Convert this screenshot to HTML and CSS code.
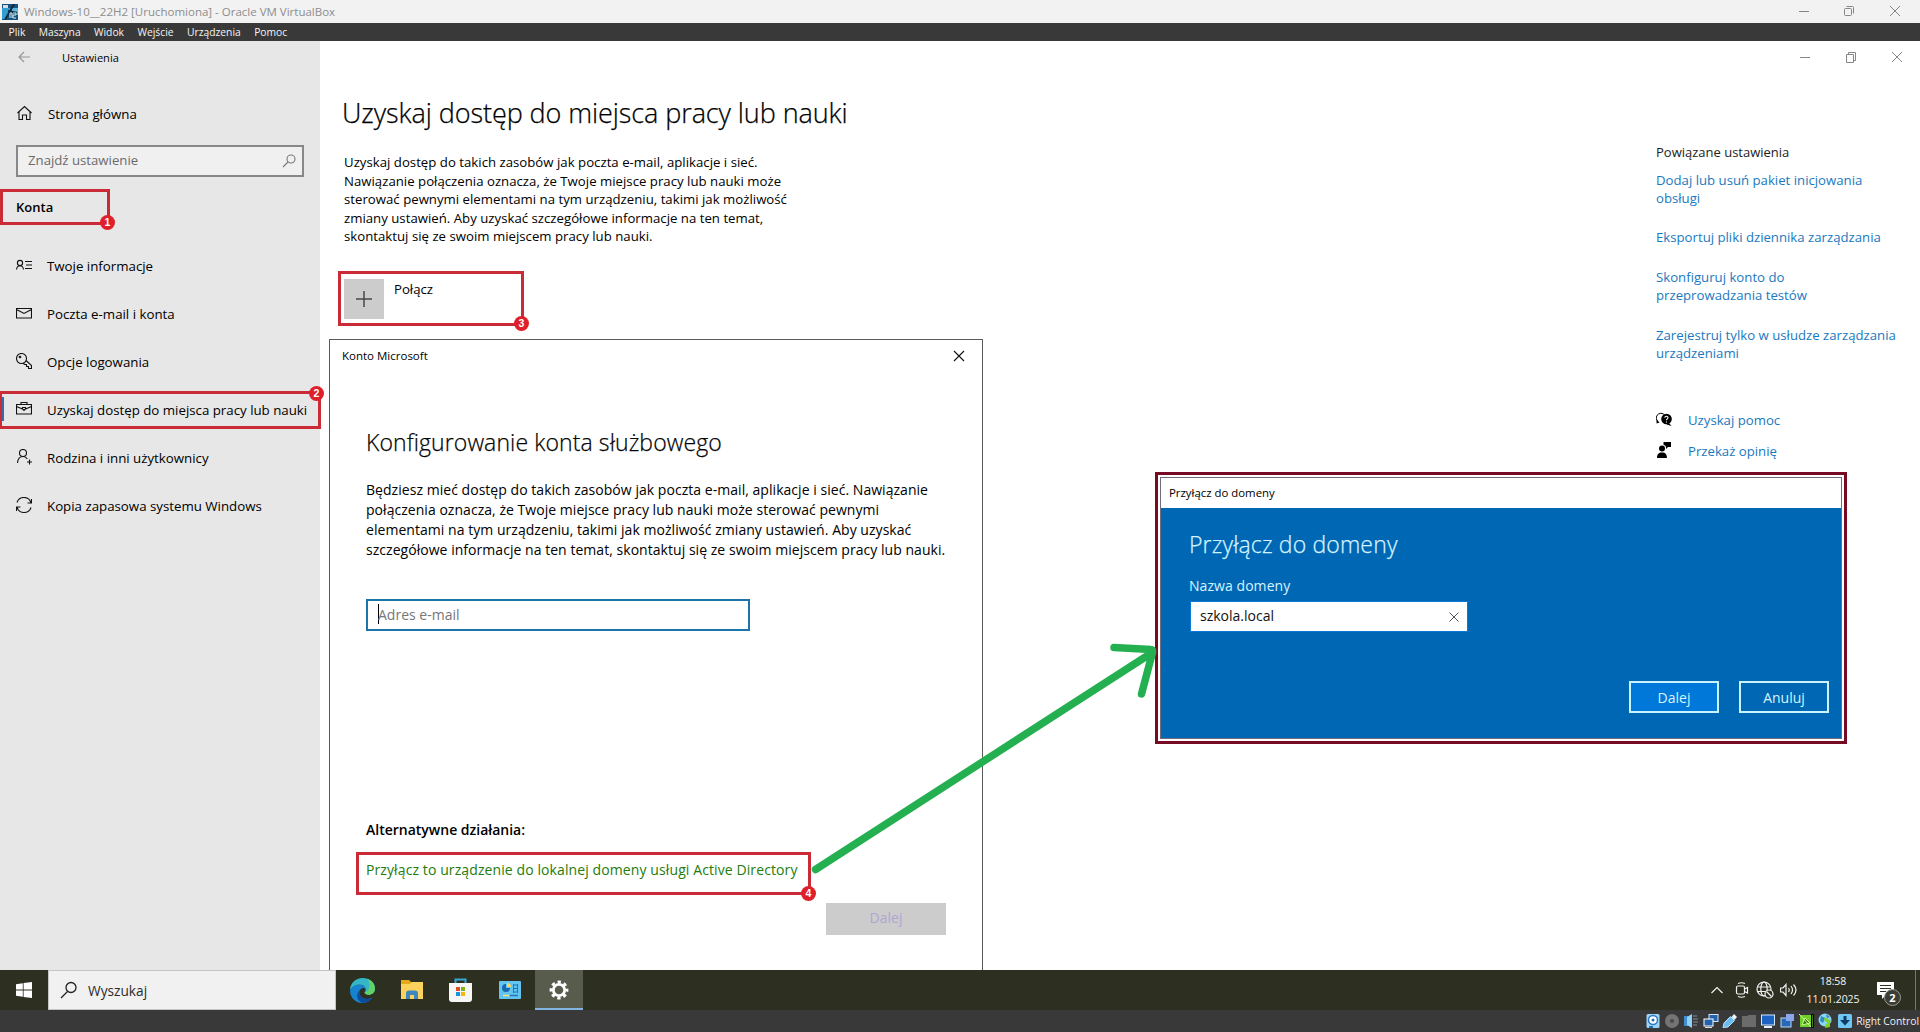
FILE: index.html
```html
<!DOCTYPE html>
<html lang="pl">
<head>
<meta charset="utf-8">
<title>Windows-10__22H2 [Uruchomiona] - Oracle VM VirtualBox</title>
<link rel="stylesheet" href="styles.css">
</head>
<body>
<header class="titlebar">
  <svg class="vm-icon" viewBox="0 0 16 16"><rect width="16" height="16" fill="#16527c"/><path d="M0 4h9L5 15H0z" fill="#2f9fd0"/><path d="M8 4h8v7l-5-3z" fill="#5fb4d8"/><path d="M1 1h5v3H1z" fill="#d6dde2"/><path d="M12 0L3 16M6 7l9 2" stroke="#0b2942" stroke-width="2"/><path d="M8 14V9h2v5M11 9h3v2h-3v3h3" stroke="#d4ecf7" fill="none"/></svg>
  <span class="titlebar-text">Windows-10__22H2 [Uruchomiona] - Oracle VM VirtualBox</span>
  <div class="window-controls host-controls">
    <svg viewBox="0 0 46 22"><path d="M18 10.5h10"/></svg>
    <svg viewBox="0 0 46 22"><rect x="18.5" y="7.500" width="7" height="7" rx="1"/><path d="M20.500 5.500h6a1 1 0 0 1 1 1v6"/></svg>
    <svg viewBox="0 0 46 22"><path d="M18 5l10 10M28 5L18 15"/></svg>
  </div>
</header>
<nav class="menubar"><span>Plik</span><span>Maszyna</span><span>Widok</span><span>Wejście</span><span>Urządzenia</span><span>Pomoc</span></nav>

<main class="guest">
  <aside class="sidebar">
    <div class="app-caption">
      <svg class="back" viewBox="0 0 12 12"><path d="M12 6H1M6 1L1 6l5 5"/></svg>
      <span>Ustawienia</span>
    </div>
    <div class="nav-item home">
      <svg viewBox="0 0 16 16"><path d="M1.500 8L8.500 1.500 15.500 8M3 7v7.500h3.500V10h4v4.500H14V7"/></svg>
      <span>Strona główna</span>
    </div>
    <div class="search-box"><span>Znajdź ustawienie</span>
      <svg viewBox="0 0 14 14"><circle cx="9" cy="5" r="4"/><path d="M6 8l-5 5"/></svg>
    </div>
    <h2 class="section">Konta</h2>
    <ul class="nav-list">
      <li class="nav-item"><svg viewBox="0 0 16 16"><circle cx="4" cy="6" r="2.600"/><path d="M.5 12.500c.3-2.500 1.500-3.800 3.500-3.800s3.200 1.300 3.500 3.800M9 4.500h7M10 8h6M9 11.500h7"/></svg><span>Twoje informacje</span></li>
      <li class="nav-item"><svg viewBox="0 0 16 16"><path d="M.5 3.500h15v9.500H.5zM.5 4.500L8 8.500l7.500-4"/></svg><span>Poczta e-mail i konta</span></li>
      <li class="nav-item"><svg viewBox="0 0 16 16"><circle cx="5.500" cy="5.500" r="5"/><circle cx="4" cy="4" r=".8"/><path d="M10 7.500l5.500 5v3h-3v-2h-2v-2h-2l-1.500-1.500"/></svg><span>Opcje logowania</span></li>
      <li class="nav-item"><svg viewBox="0 0 16 16"><path d="M.5 3.500h15v9.500H.5zM5 3.500v-2h6v2M.5 5.500L6.500 8M15.500 5.500L9.500 8M6.500 6.500h3v1.500L8 9.500 6.500 8z"/></svg><span>Uzyskaj dostęp do miejsca pracy lub nauki</span></li>
      <li class="nav-item"><svg viewBox="0 0 16 16"><circle cx="7" cy="4" r="3.500"/><path d="M1.500 14c.3-4 2.300-6.500 5.500-6.500 2 0 3.500 1 4.300 2.500M13.500 10.500v5M11 13h5"/></svg><span>Rodzina i inni użytkownicy</span></li>
      <li class="nav-item"><svg viewBox="0 0 16 16"><path d="M1 5.500A7.300 7.300 0 0 1 15 6M15.500 2v4h-4M15 10.500A7.300 7.300 0 0 1 1 10M.5 14v-4h4"/></svg><span>Kopia zapasowa systemu Windows</span></li>
    </ul>
  </aside>

  <section class="content">
    <h1>Uzyskaj dostęp do miejsca pracy lub nauki</h1>
    <p class="intro">Uzyskaj dostęp do takich zasobów jak poczta e-mail, aplikacje i sieć.<br>Nawiązanie połączenia oznacza, że Twoje miejsce pracy lub nauki może<br>sterować pewnymi elementami na tym urządzeniu, takimi jak możliwość<br>zmiany ustawień. Aby uzyskać szczegółowe informacje na ten temat,<br>skontaktuj się ze swoim miejscem pracy lub nauki.</p>
    <div class="connect">
      <span class="connect-tile"><svg viewBox="0 0 16 16"><path d="M8 0v16M0 8h16"/></svg></span>
      <span>Połącz</span>
    </div>
  </section>

  <aside class="related">
    <div class="window-controls">
      <svg viewBox="0 0 46 32"><path d="M18 16.500h10"/></svg>
      <svg viewBox="0 0 46 32"><path d="M18.500 13.500h7v8h-7zM20.500 13.500v-2h7v8h-2"/></svg>
      <svg viewBox="0 0 46 32"><path d="M18 11l10 10M28 11L18 21"/></svg>
    </div>
    <h3>Powiązane ustawienia</h3>
    <a>Dodaj lub usuń pakiet inicjowania<br>obsługi</a>
    <a>Eksportuj pliki dziennika zarządzania</a>
    <a>Skonfiguruj konto do<br>przeprowadzania testów</a>
    <a>Zarejestruj tylko w usłudze zarządzania<br>urządzeniami</a>
    <div class="support">
      <div><svg viewBox="0 0 16 16"><path d="M1.500 11.500l-.5-2a4.500 4.500 0 1 1 8-5" fill="none" stroke="#000"/><path d="M.8 8.500L.5 12.500l3-1z"/><circle cx="10.500" cy="8" r="5.300"/><path d="M13 12l2.500 3-5-1.500z"/><path d="M8.800 6.700c.2-2 3.300-1.800 3.200.1-.1 1.200-1.500 1-1.500 2.500M10.500 10.500v1" fill="none" stroke="#fff" stroke-width="1.100"/></svg><a>Uzyskaj pomoc</a></div>
      <div><svg viewBox="0 0 16 16"><circle cx="6" cy="6.500" r="3"/><path d="M1 16c0-3.500 1.500-5.500 5-5.500s5 2 5 5.500zM7.500 0H15v5h-3l-2 2V5C9.500 3.500 8.500 3 7.500 2.700z"/></svg><a>Przekaż opinię</a></div>
    </div>
  </aside>
</main>

<footer class="taskbar">
  <svg class="start" viewBox="0 0 16 16"><path d="M0 2.200L6.800 1.200v6.300H0zM7.600 1.100L16 0v7.500H7.600zM0 8.400h6.800v6.400L0 13.800zM7.600 8.400H16V16l-8.400-1.100z"/></svg>
  <div class="task-search"><svg viewBox="0 0 18 18"><circle cx="11" cy="6.500" r="5"/><path d="M7.500 10.500L1 17"/></svg><span>Wyszukaj</span></div>
  <div class="task-apps">
    <span><svg width="25" height="25" viewBox="0 0 24 24"><path d="M12 0c7 0 12 4.500 12 10 0 4-3 6-6 6-2.500 0-4-.8-4-2 0-.8 1-1 1-3 0-2.500-2.500-4.500-6-4.500C5 6.500 1.500 9 0 12 0 5 5.500 0 12 0z" fill="#35b6c8"/><path d="M17 1c4 1.500 7 5 7 9 0 4-3 6-6 6-2.500 0-4-.8-4-2 5-1 6-8 3-13z" fill="#62d266"/><path d="M0 12C1.500 8.500 5 6.500 9 6.500c3 0 5.500 1.500 6 4-2.500-2-6 0-6 3.500 0 5 6 8 12 5-2 3.500-6 5-9.500 5C5 24 0 18.500 0 12z" fill="#1683d0"/><path d="M9 14c0 5 6 8 12.500 5-2 3-5.500 5-9 5C7 23 4.500 15 10 11c-.7 1-1 2-1 3z" fill="#0b4d9c"/></svg></span>
    <span><svg width="22" height="20" viewBox="0 0 22 20"><path d="M0 0h8l2 2h12v17H0z" fill="#e5a91c"/><path d="M0 4h9l2-2h11v17H0z" fill="#fbd35c"/><path d="M5 19v-5.500a3 3 0 0 1 3-3h6a3 3 0 0 1 3 3V19h-4v-4H9v4z" fill="#3d88bd"/></svg></span>
    <span><svg width="23" height="25" viewBox="0 0 23 25"><path d="M6.500 6V1.500h10V6" fill="none" stroke="#35a7d5" stroke-width="2"/><path d="M0 5h23v16a3 3 0 0 1-3 3H3a3 3 0 0 1-3-3z" fill="#f6f6f6"/><path d="M7 9h4v4H7z" fill="#e04b2a"/><path d="M12 9h4v4h-4z" fill="#7cb518"/><path d="M7 14h4v4H7z" fill="#1696d8"/><path d="M12 14h4v4h-4z" fill="#f5b614"/></svg></span>
    <span><svg width="22" height="18" viewBox="0 0 22 18"><rect width="22" height="18" rx="1" fill="#63c3f1"/><path d="M7 3a4 4 0 1 0 4 4H7z" fill="#1769b0"/><path d="M8 2a4 4 0 0 1 4 4H8z" fill="#ffd65a"/><path d="M14 4h5M14 7.500h5M14 11h5M14.500 3v9M18.500 3v9" stroke="#2078b8"/><path d="M4 14.500h6" stroke="#f7e179" stroke-width="1.500"/><path d="M11 14.500h8" stroke="#2078b8" stroke-width="1.500"/></svg></span>
    <span class="active"><svg width="20" height="20" viewBox="0 0 20 20"><circle cx="10" cy="10" r="5.700" fill="none" stroke="#fff" stroke-width="2.800"/><circle cx="10" cy="10" r="8" fill="none" stroke="#fff" stroke-width="2.800" stroke-dasharray="3.300 2.983" stroke-dashoffset="1.650"/></svg></span>
  </div>
  <div class="tray">
    <svg class="t-chevron" viewBox="0 0 12 8"><path d="M.5 7L6 1.500 11.500 7"/></svg>
    <svg class="t-camera" viewBox="0 0 14 16"><rect x="1.500" y="4" width="8" height="8" rx="1.500"/><path d="M9.500 7l3-1.500v5.500l-3-1.500M3 1.500Q6.500 0 10 1.500M3 14.500q3.500 1.500 7 0"/></svg>
    <svg class="t-globe" viewBox="0 0 18 18"><circle cx="8" cy="8" r="7"/><ellipse cx="8" cy="8" rx="3.200" ry="7"/><path d="M1 6h14M1 10.500h14"/><circle cx="13" cy="13" r="4" fill="#2d3021"/><path d="M10.500 10.500l5 5"/></svg>
    <svg class="t-sound" viewBox="0 0 18 14"><path d="M.5 5h2.500l3-3.500v11L3 9H.5zM8.500 5q1.500 2 0 4M11 3q3 4 0 8M13.500 1.500q5 5.500 0 11"/></svg>
    <div class="clock"><span>18:58</span><span>11.01.2025</span></div>
    <div class="action-center"><svg viewBox="0 0 18 18"><path d="M0 0h17v13H9l-4 4v-4H0z" fill="#fff"/><path d="M3 3.500h11M3 6.500h11M3 9.500h6" stroke="#2d3021"/></svg><b>2</b></div>
  </div>
</footer>

<div class="statusbar">
  <svg viewBox="0 0 16 16"><rect x="1.500" y="1" width="13" height="14" rx="1.500" fill="#9ed5f5"/><circle cx="8" cy="7" r="4.500" fill="#fff" stroke="#2c77c6" stroke-width="1.500"/><circle cx="8" cy="7" r="1.500" fill="#236cb8"/><path d="M4 14h4" stroke="#236cb8" stroke-width="2"/></svg>
  <svg viewBox="0 0 16 16"><circle cx="8" cy="8" r="7" fill="#747474"/><circle cx="8" cy="8" r="2" fill="#484848"/></svg>
  <svg viewBox="0 0 16 16"><path d="M1 3h4v10H1z" fill="#3d8fd1"/><path d="M4 4l5-3v14l-5-3z" fill="#8fd2f7"/><path d="M10 3h4M10 6h5M10 9h5M10 12h4" stroke="#5b646b" stroke-width="2"/></svg>
  <svg viewBox="0 0 16 16"><rect x="6" y="1.500" width="9" height="7" fill="#2462ae" stroke="#cfe6f8"/><rect x="1" y="6" width="9" height="7" fill="#2462ae" stroke="#fff"/><path d="M2 14.500h7" stroke="#cfe6f8"/></svg>
  <svg viewBox="0 0 16 16"><path d="M1 14.500L2 10l6.500-6.500 4 4L6 14z" fill="#6bbcf0" stroke="#b8e2fb"/><path d="M9.500 4L12 1l3 3-2.500 3z" fill="#e9f4fb"/></svg>
  <svg viewBox="0 0 16 16"><path d="M1 3h5l2-1h7v12H1z" fill="#6b6b6b"/></svg>
  <svg viewBox="0 0 16 16"><rect x="1.500" y="2" width="13" height="10" fill="#1c62c2" stroke="#cfeaff"/><path d="M4 14h8" stroke="#e5f3ff" stroke-width="2"/></svg>
  <svg viewBox="0 0 16 16"><rect x="2" y="5" width="10" height="9" fill="#2868bb" stroke="#b9dcf6"/><rect x="7" y="1" width="8" height="7" fill="#89a6ee"/></svg>
  <svg viewBox="0 0 16 16"><rect x="1" y="2" width="11" height="12" fill="#6fd02a"/><path d="M0 1l12 13M3 12l3-7 5 5z" stroke="#d0fa95" fill="#2c7a12"/><path d="M12.500 1.500h2v13h-2z" stroke="#000" fill="#437b22"/></svg>
  <svg viewBox="0 0 16 16"><circle cx="7" cy="7" r="6.500" fill="#88d5f5"/><path d="M3 3l4 2-2 5-3-2zM8 1l4 3-3 1z" fill="#3488c0"/><path d="M7 4l7 5h-2v5l-5 1 1-4 2-1-4-3z" fill="#7ed321"/></svg>
  <svg viewBox="0 0 16 16"><rect x="1" y="1" width="14" height="14" rx="1.500" fill="#6fc7f5"/><path d="M6.500 3h3v4H13l-5 5.500L3 7h3.500z" fill="#103c66"/></svg>
  <span>Right Control</span>
</div>

<section class="account-dialog">
  <header><span>Konto Microsoft</span><svg viewBox="0 0 12 12"><path d="M1 1l10 10M11 1L1 11"/></svg></header>
  <div class="account-body">
    <h2>Konfigurowanie konta służbowego</h2>
    <p>Będziesz mieć dostęp do takich zasobów jak poczta e-mail, aplikacje i sieć. Nawiązanie<br>połączenia oznacza, że Twoje miejsce pracy lub nauki może sterować pewnymi<br>elementami na tym urządzeniu, takimi jak możliwość zmiany ustawień. Aby uzyskać<br>szczegółowe informacje na ten temat, skontaktuj się ze swoim miejscem pracy lub nauki.</p>
    <div class="email-field"><i></i><span>Adres e-mail</span></div>
    <h4>Alternatywne działania:</h4>
    <a>Przyłącz to urządzenie do lokalnej domeny usługi Active Directory</a>
    <div class="next-disabled">Dalej</div>
  </div>
</section>

<section class="domain-frame">
  <div class="domain-dialog">
    <header>Przyłącz do domeny</header>
    <div class="domain-body">
      <h2>Przyłącz do domeny</h2>
      <label>Nazwa domeny</label>
      <div class="domain-input"><span>szkola.local</span><svg viewBox="0 0 10 10"><path d="M.5.5l9 9M9.500.5l-9 9"/></svg></div>
      <div class="domain-actions"><span class="primary">Dalej</span><span>Anuluj</span></div>
    </div>
  </div>
</section>

<div class="mark-bar"></div>
<div class="mark mark-1"><b>1</b></div>
<div class="mark mark-2"><b>2</b></div>
<div class="mark mark-3"><b>3</b></div>
<div class="mark mark-4"><b>4</b></div>
<svg class="arrow" viewBox="0 0 350 240"><path d="M15.500 229.500L350 14M314 7.500l37 2q2 0 1.500 3L341.500 54"/></svg>
</body>
</html>
```
FILE: styles.css
```css
* { box-sizing: border-box; }
body {
  margin: 0; width: 1920px; height: 1032px; overflow: hidden; position: relative;
  display: flex; flex-direction: column;
  font-family: "Open Sans", "Noto Sans", sans-serif; font-size: 13.3px; color: #000; background: #fff;
}
h1, h2, h3, h4, p, ul { margin: 0; padding: 0; font-weight: 400; }
ul { list-style: none; }
svg { display: block; flex: none; }

.titlebar { height: 23px; background: #f2f2f2; display: flex; align-items: center; padding-left: 2px; color: #8d8d8d; flex: none; }
.vm-icon { width: 16px; height: 16px; margin-right: 6px; }
.titlebar-text { font-size: 11.5px; line-height: 23px; }
.window-controls { display: flex; margin-left: auto; }
.window-controls svg { width: 46px; height: 32px; fill: none; stroke: #868686; stroke-width: 1; }
.host-controls { padding-right: 2px; }
.host-controls svg { height: 22px; }
.host-controls svg:first-child { margin-right: -1px; }

.menubar { height: 18px; background: #393939; color: #f4f4f4; display: flex; gap: 13.400px; padding-left: 8.500px; font-size: 10.3px; line-height: 18px; flex: none; }

.guest { height: 929px; flex: none; display: grid; grid-template-columns: 320px 1fr 266px; }
.sidebar { background: #e7e7e7; }
.app-caption { height: 33px; display: flex; align-items: center; padding-left: 18px; gap: 32px; font-size: 11.1px; }
.back { width: 12px; height: 12px; fill: none; stroke: #979797; stroke-width: 1.200; margin-top: -1px; }
.nav-item { height: 48px; display: flex; align-items: center; gap: 15px; padding-left: 16px; white-space: nowrap; letter-spacing: -.01px; }
.nav-item svg { width: 16px; height: 16px; fill: none; stroke: #111; stroke-width: 1.100; margin-top: -2px; }
.home { margin-top: 16px; gap: 16px; }
.search-box {
  margin: 7px 16px 0; height: 32px; border: 2px solid #888; background: #f0f0f0; color: #6b6b6b;
  display: flex; align-items: center; justify-content: space-between; padding: 0 6px 2px 10px; font-size: 13.200px;
}
.search-box svg { width: 14px; height: 14px; fill: none; stroke: #777; stroke-width: 1.100; margin-top: 2px; }
.section { font-size: 13px; font-weight: 600; line-height: 34px; padding-left: 16px; margin: 13px 0 18px; }

.content { padding: 52px 0 0 22px; }
.content h1 { font-size: 27px; line-height: 40px; letter-spacing: -.08px; font-weight: 300; -webkit-text-stroke: .25px #000; }
.intro { margin-top: 20px; padding-left: 2px; font-size: 13.200px; line-height: 18.600px; white-space: nowrap; letter-spacing: .015px; }
.connect { margin: 33px 0 0 2px; display: flex; gap: 10px; font-size: 13.200px; line-height: 20px; }
.connect-tile { width: 40px; height: 40px; background: #ccc; display: grid; place-items: center; }
.connect-tile svg { width: 16px; height: 16px; fill: none; stroke: #484848; stroke-width: 1.500; }

.related { font-size: 13.200px; line-height: 18px; white-space: nowrap; }
.related .window-controls { padding-left: 128px; margin-bottom: 70px; }
.related h3 { font-size: 13px; margin-bottom: 10px; padding-left: 2px; color: #222; }
.related a { color: #1979bf; }
.related > a { display: block; padding-left: 2px; margin-bottom: 22px; }
.related > h3 + a { margin-bottom: 21px; }
.support { padding: 27px 0 0 2px; display: grid; gap: 13px; }
.support div { display: flex; gap: 16px; }
.support svg { width: 16px; height: 16px; fill: #000; }

.taskbar { height: 40px; flex: none; background: #2d3021; display: flex; align-items: center; }
.start { width: 16px; height: 16px; margin: 0 16px; fill: #fff; }
.task-search { width: 288px; height: 40px; background: #f1f1f1; border: 1px solid #c4c4c4; display: flex; align-items: center; gap: 10px; padding-left: 11px; color: #2b2b2b; font-size: 13.700px; }
.task-search svg { width: 18px; height: 18px; fill: none; stroke: #222; stroke-width: 1.300; }
.task-apps { display: flex; margin-left: 2px; }
.task-apps span { width: 49px; height: 40px; display: grid; place-items: center; }
.task-apps .active { width: 48px; margin-left: 1px; padding-top: 1px; background: #585c4c; border-bottom: 2px solid #82b4e0; }
.tray { display: flex; align-items: center; margin-left: auto; width: 209px; height: 40px; }
.tray svg { fill: none; stroke: #f2f2f2; stroke-width: 1.200; }
.t-chevron { width: 12px; height: 8px; }
.t-camera { width: 14px; height: 16px; margin-left: 12px; }
.t-globe { width: 18px; height: 18px; margin-left: 7px; }
.t-sound { width: 18px; height: 14px; margin-left: 6px; }
.clock { width: 56px; margin-left: 7px; display: flex; flex-direction: column; align-items: center; color: #f4f4f4; font-size: 10.500px; line-height: 18px; letter-spacing: -.05px; position: relative; top: -.5px; }
.action-center { position: relative; margin-left: 16px; width: 39px; height: 40px; padding-top: 12px; border-right: 1px solid #77796f; margin-right: 4px; }
.action-center svg { width: 18px; height: 18px; stroke: none; }
.action-center b { position: absolute; left: 7px; top: 19px; width: 17px; height: 17px; border: 1px solid #999; border-radius: 50%; background: #3c3e36; color: #fff; font-size: 11px; line-height: 15px; text-align: center; }

.statusbar { height: 22px; flex: none; background: #393939; display: flex; justify-content: flex-end; align-items: center; gap: 3.200px; padding-right: 1px; color: #f0f0f0; font-size: 10.300px; }
.statusbar svg { width: 16px; height: 16px; }

.account-dialog { position: absolute; left: 329px; top: 339px; width: 654px; height: 631px; border: 1px solid #5b5b5b; border-bottom: 0; background: #fff; }
.account-dialog header { height: 32px; display: flex; align-items: center; justify-content: space-between; padding: 0 17px 0 12px; font-size: 11.500px; }
.account-dialog header span { margin-top: -2px; }
.account-dialog header svg { width: 12px; height: 12px; fill: none; stroke: #111; stroke-width: 1.100; }
.account-body { padding: 51px 36px 0 36px; font-size: 14px; white-space: nowrap; display: flex; flex-direction: column; }
.account-body h2 { font-size: 23px; line-height: 38px; font-weight: 300; letter-spacing: .1px; -webkit-text-stroke: .25px #111; }
.account-body p { line-height: 20px; margin-top: 19px; letter-spacing: .04px; }
.email-field { width: 384px; height: 32px; border: 2px solid #1b75ab; margin-top: 39px; display: flex; align-items: center; padding: 0 0 2px 10px; color: #777; }
.email-field i { width: 1px; height: 20px; background: #000; margin-right: -1px; }
.account-body h4 { font-weight: 600; font-size: 14px; line-height: 20px; margin-top: 189px; }
.account-body a { line-height: 20px; margin-top: 20px; color: #257c0c; letter-spacing: .1px; }
.next-disabled { width: 120px; height: 32px; margin: 23px 0 0 460px; background: #ccc; color: #b0a6d3; text-align: center; line-height: 30px; }

.domain-frame { position: absolute; left: 1155px; top: 472px; width: 692px; height: 272px; border: 3px solid #770b23; background: #fff; padding: 2px; }
.domain-dialog { height: 100%; border: 1px solid #716c80; }
.domain-dialog header { height: 30px; padding-left: 8px; line-height: 30px; font-size: 11.400px; }
.domain-body { height: calc(100% - 30px); background: #0067b4; color: #d6f4ff; padding: 18px 12px 0 28px; display: flex; flex-direction: column; font-size: 14px; }
.domain-body h2 { font-size: 23px; line-height: 36px; font-weight: 300; letter-spacing: .15px; -webkit-text-stroke: .25px #d6f4ff; }
.domain-body label { line-height: 20px; margin-top: 14px; letter-spacing: .06px; }
.domain-input { width: 278px; height: 31px; margin: 5px 0 0 1px; border: 1px solid #0a78d6; background: #fff; color: #111; display: flex; align-items: center; justify-content: space-between; padding: 0 8px 2px 9px; }
.domain-input svg { width: 10px; height: 10px; fill: none; stroke: #555; margin-top: 2px; }
.domain-actions { display: flex; justify-content: flex-end; gap: 20px; margin-top: 49px; }
.domain-actions span { width: 90px; height: 32px; border: 2px solid #c9f3fd; text-align: center; line-height: 29px; }
.domain-actions .primary { background: #0078d9; }

.mark { position: absolute; border: 3px solid #cb2b36; }
.mark b { position: absolute; right: -8px; bottom: -8px; width: 15px; height: 15px; border-radius: 50%; background: #df202b; color: #fff; font: bold 10.500px/15px "Liberation Sans", sans-serif; text-align: center; }
.mark-1 { left: 0; top: 189px; width: 110px; height: 36px; }
.mark-2 { left: -1px; top: 391px; width: 322px; height: 38px; }
.mark-2 b { bottom: auto; top: -8px; right: -6px; }
.mark-3 { left: 338px; top: 271px; width: 186px; height: 55px; }
.mark-4 { left: 356px; top: 852px; width: 455px; height: 43px; }
.mark-4 b { bottom: -9px; }
.mark-bar { position: absolute; left: 2px; top: 397px; width: 2px; height: 24px; background: #3b6aa8; }
.arrow { position: absolute; left: 800px; top: 640px; width: 350px; height: 240px; overflow: visible; fill: none; stroke: #24b050; stroke-width: 7.500; stroke-linecap: round; stroke-linejoin: round; }
```
